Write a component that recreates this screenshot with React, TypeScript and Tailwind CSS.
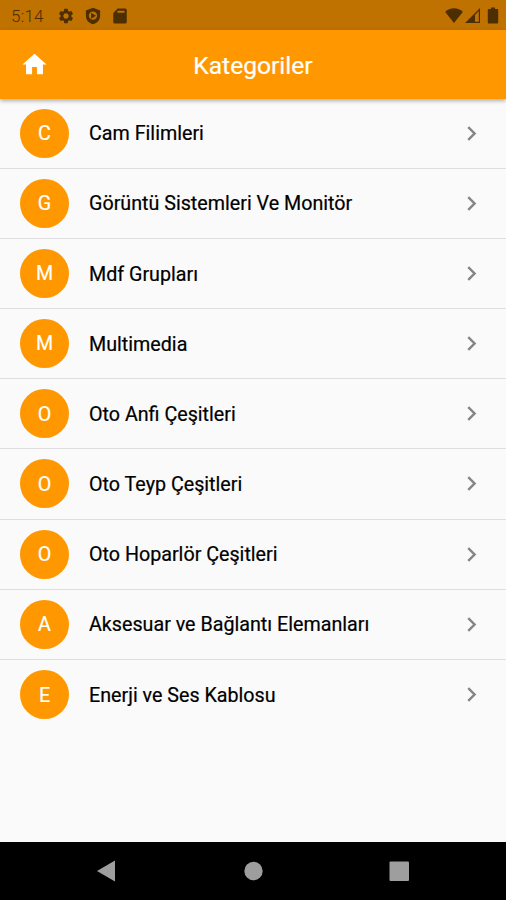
import { MdChevronRight, MdHome, MdSettings } from "react-icons/md";

const categories: string[] = [
	"Cam Filimleri",
	"Görüntü Sistemleri Ve Monitör",
	"Mdf Grupları",
	"Multimedia",
	"Oto Anfi Çeşitleri",
	"Oto Teyp Çeşitleri",
	"Oto Hoparlör Çeşitleri",
	"Aksesuar ve Bağlantı Elemanları",
	"Enerji ve Ses Kablosu",
];

const StatusBar = () => (
	<div className="flex h-[30px] shrink-0 items-center bg-[#bf7200] pt-px pr-[5px] pl-[11px] text-[#4d2e00]">
		<span className="w-[46px] pt-px text-[17px] leading-none tracking-[0.2px] font-light text-[#4d2e00]">5:14</span>
		<MdSettings className="h-[18px] w-[18px]" />
		<svg viewBox="0 0 24 24" className="ml-[9px] h-[18px] w-[18px]" fill="currentColor">
			<path fillRule="evenodd" d="M12 1 2.500 4.500v7c0 5.500 4 9.800 9.500 11.500 5.500-1.700 9.500-6 9.500-11.500v-7L12 1ZM12 6a5.500 5.500 0 1 1 0 11 5.500 5.500 0 0 1 0-11ZM9.500 7.500v8l6.500-4-6.500-4Z" />
		</svg>
		<svg viewBox="0 0 24 24" className="ml-[9px] h-[18px] w-[18px]" fill="currentColor">
			<path fillRule="evenodd" d="M9 2h10a2 2 0 0 1 2 2v16a2 2 0 0 1-2 2H5a2 2 0 0 1-2-2V8l6-6ZM8.500 5v2.500H18V5H8.500Z" />
		</svg>
		<svg viewBox="0 0 18 15" className="ml-auto h-[15px] w-[18px]" fill="currentColor">
			<path d="M9 15 .2 4C2.600 1.400 5.600.2 9 .2s6.400 1.200 8.800 3.800L9 15Z" />
		</svg>
		<svg viewBox="0 0 15 15" className="ml-[2px] h-[15px] w-[15px]" fill="currentColor">
			<path fillRule="evenodd" d="M15 0v15H0L15 0ZM13.800 3 10 7v6.800h3.800V3Z" />
		</svg>
		<svg viewBox="0 0 12 17" className="mr-[2px] ml-[7px] h-[17px] w-[12px]" fill="currentColor">
			<path d="M4 .5h4V2h2.200a1 1 0 0 1 1 1v12.500a1 1 0 0 1-1 1H1.800a1 1 0 0 1-1-1V3a1 1 0 0 1 1-1H4V.5Z" />
		</svg>
	</div>
);

const Header = () => (
	<header className="z-10 grid h-[68.8px] shrink-0 grid-cols-[69px_1fr_69px] items-center bg-[#ff9800] text-white shadow-[0_2px_4px_rgba(0,0,0,0.3)]">
		<button type="button" title="Ana sayfa" className="flex justify-center">
			<MdHome className="h-[29px] w-[29px]" />
		</button>
		<h1 className="pt-[3px] text-center text-[24.6px] leading-none font-normal [-webkit-text-stroke:0.2px]">Kategoriler</h1>
	</header>
);

const CategoryRow = ({ name }: { name: string }) => (
	<li className="flex h-[70.13px] items-center border-b border-[#dedede] pr-[20px] pl-[20px] last:border-b-0">
		<span className="flex h-[49px] w-[49px] items-center justify-center rounded-full bg-[#ff9800] pt-px text-[19.7px] text-white [-webkit-text-stroke:0.2px]">
			{ name[0] }
		</span>
		<span className="ml-[20px] flex-1 pt-[1.5px] text-[19.7px] text-black [-webkit-text-stroke:0.2px]">{ name }</span>
		<MdChevronRight className="h-[29px] w-[29px] text-[#858585]" />
	</li>
);

const NavigationBar = () => (
	<nav className="h-[58px] shrink-0 bg-black">
		<svg viewBox="0 0 506 58" className="block h-full w-full" fill="#9e9e9e">
			<path d="M97 29 115 18.500v21Z" />
			<circle cx="253.500" cy="29" r="9.200" />
			<rect x="389.500" y="19.500" width="19.500" height="19.500" rx="1" />
		</svg>
	</nav>
);

const App = () => (
	<div className="flex h-screen w-full flex-col overflow-hidden bg-[#fafafa] font-['Roboto',sans-serif]">
		<StatusBar />
		<Header />
		<ul className="flex-1">
			{ categories.map ((name) => <CategoryRow key={ name } name={ name } />) }
		</ul>
		<NavigationBar />
	</div>
);

export default App;
